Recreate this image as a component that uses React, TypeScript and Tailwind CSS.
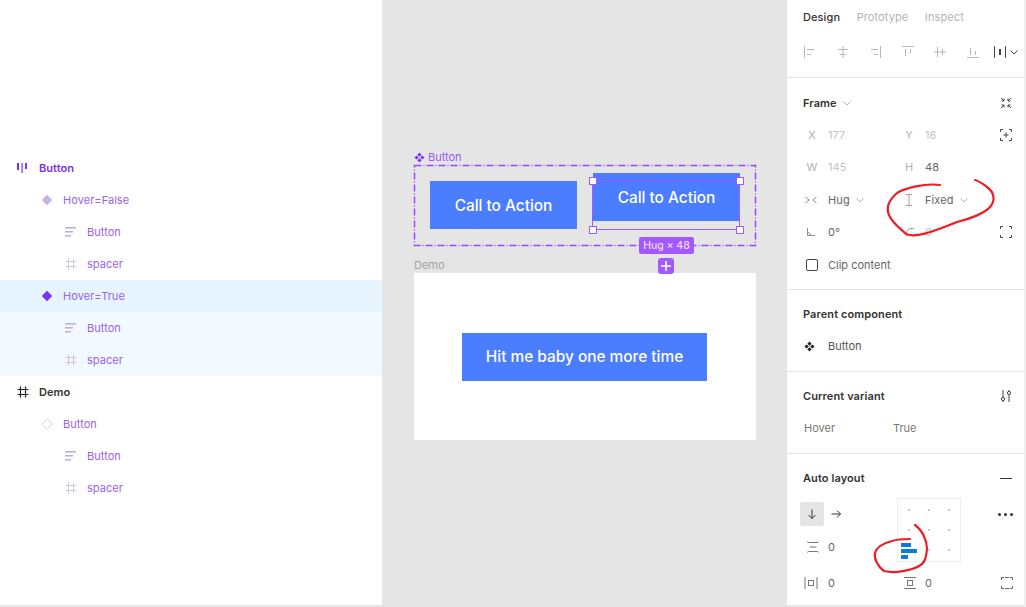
const purple = '#7b2ff0';

function TextIcon() {
  return (
    <svg width="12" height="10" viewBox="0 0 12 10" fill="#c4aed9">
      <rect x="0" y="0" width="11" height="1.6" />
      <rect x="0" y="4" width="8" height="1.6" />
      <rect x="0" y="8" width="6" height="1.6" />
    </svg>
  );
}

function HashIcon({ color = '#d3c3e4', strong = false }: { color?: string; strong?: boolean }) {
  return (
    <svg width="12" height="12" viewBox="0 0 12 12" fill="none" stroke={color} strokeWidth={strong ? 1.2 : 1}>
      <path d="M3.5 0.5v11M8.5 0.5v11M0.5 3.5h11M0.5 8.5h11" />
    </svg>
  );
}

function Diamond({ fill, stroke }: { fill: string; stroke?: string }) {
  return (
    <svg width="12" height="12" viewBox="0 0 12 12" fill={fill} stroke={stroke}>
      <path d="M6 0.8 11.2 6 6 11.2 0.8 6Z" />
    </svg>
  );
}

function AutoLayoutIcon() {
  return (
    <svg width="12" height="10" viewBox="0 0 12 10" fill={purple}>
      <rect x="0" y="0" width="2" height="7" />
      <rect x="4.5" y="0" width="1.2" height="10" />
      <rect x="8" y="0" width="2" height="6" />
    </svg>
  );
}

function ComponentIcon({ color, size = 11 }: { color: string; size?: number }) {
  return (
    <svg width={size} height={size} viewBox="0 0 12 12" fill={color}>
      <path d="M6 0.5 8.3 2.9 6 5.2 3.7 2.9Z" />
      <path d="M6 6.8 8.3 9.1 6 11.5 3.7 9.1Z" />
      <path d="M2.9 3.7 5.2 6 2.9 8.3 0.5 6Z" />
      <path d="M9.1 3.7 11.5 6 9.1 8.3 6.8 6Z" />
    </svg>
  );
}

function Chevron({ className = '' }: { className?: string }) {
  return (
    <svg className={className} width="8" height="5" viewBox="0 0 8 5" fill="none" stroke="#b3b3b3">
      <path d="M0.5 0.5 4 4 7.5 0.5" />
    </svg>
  );
}

type LayerRowProps = {
  icon: React.ReactNode;
  label: string;
  depth: number;
  bg?: string;
  bold?: boolean;
  dark?: boolean;
};

function LayerRow({ icon, label, depth, bg = '', bold, dark }: LayerRowProps) {
  const pad = depth === 0 ? 'pl-[17px]' : depth === 1 ? 'pl-[41px]' : 'pl-[65px]';
  return (
    <div className={`flex h-8 items-center ${pad} ${bg}`}>
      <span className="flex w-[22px] items-center">{icon}</span>
      <span
        className={`text-[11px] tracking-[0.05px] ${bold ? 'font-semibold' : 'font-normal'} ${
          dark ? 'text-[#333333]' : bold ? 'text-[#7b2ff0]' : 'text-[#9a63e8]'
        }`}
      >
        {label}
      </span>
    </div>
  );
}

function LayersPanel() {
  return (
    <div className="h-full w-[382px] shrink-0 bg-white pt-[152px]">
      <LayerRow icon={<AutoLayoutIcon />} label="Button" depth={0} bold />
      <LayerRow icon={<Diamond fill="#c8b4de" />} label="Hover=False" depth={1} />
      <LayerRow icon={<TextIcon />} label="Button" depth={2} />
      <LayerRow icon={<HashIcon />} label="spacer" depth={2} />
      <LayerRow icon={<Diamond fill={purple} />} label="Hover=True" depth={1} bg="bg-[#e5f4ff]" />
      <LayerRow icon={<TextIcon />} label="Button" depth={2} bg="bg-[#f2f9ff]" />
      <LayerRow icon={<HashIcon />} label="spacer" depth={2} bg="bg-[#f2f9ff]" />
      <LayerRow icon={<HashIcon color="#222222" strong />} label="Demo" depth={0} bold dark />
      <LayerRow icon={<Diamond fill="none" stroke="#dccdec" />} label="Button" depth={1} />
      <LayerRow icon={<TextIcon />} label="Button" depth={2} />
      <LayerRow icon={<HashIcon />} label="spacer" depth={2} />
    </div>
  );
}

function Handle({ className }: { className: string }) {
  return <div className={`absolute h-2 w-2 border border-[#a259ff] bg-white ${className}`} />;
}

function Canvas() {
  return (
    <div className="relative h-full w-[405px] shrink-0 bg-[#e5e5e5]">
      <div className="absolute left-[32px] top-[149px] flex items-center gap-[3px] text-[11px] text-[#9a5cf0]">
        <ComponentIcon color={purple} />
        <span>Button</span>
      </div>
      <svg className="absolute left-[31px] top-[164px]" width="344" height="83" fill="none" stroke="#9747ff" strokeWidth="1.5">
        <rect x="1.5" y="1.5" width="341" height="80" strokeDasharray="7 2 1 2" />
      </svg>
      <div className="absolute left-[48px] top-[181px] flex h-[48px] w-[147px] items-center justify-center bg-[#4a7dff] pt-[2px] text-[15.4px] font-medium text-white">
        Call to Action
      </div>
      <div className="absolute left-[211px] top-[173px] flex h-[48px] w-[147px] items-center justify-center bg-[#4a7dff] pt-[2px] text-[15.4px] font-medium text-white">
        Call to Action
      </div>
      <div className="absolute left-[210px] top-[180px] h-[50px] w-[148px] border border-[#a259ff]" />
      <Handle className="left-[207px] top-[177px]" />
      <Handle className="left-[354px] top-[177px]" />
      <Handle className="left-[207px] top-[226px]" />
      <Handle className="left-[354px] top-[226px]" />
      <div className="absolute left-[257px] top-[237px] flex h-[17px] w-[55px] items-center justify-center rounded-[2px] bg-[#a259ff] text-[10.5px] font-medium text-[#eadcff]">
        Hug × 48
      </div>
      <div className="absolute left-[276px] top-[258px] z-10 flex h-4 w-4 items-center justify-center rounded-[3px] bg-[#a259ff]">
        <svg width="12" height="12" viewBox="0 0 12 12" stroke="white" strokeWidth="1.6">
          <path d="M6 1v10M1 6h10" />
        </svg>
      </div>
      <div className="absolute left-[32px] top-[257px] text-[11px] text-[#a3a3a3]">Demo</div>
      <div className="absolute left-[32px] top-[273px] flex h-[167px] w-[342px] items-center bg-white pl-[48px]">
        <div className="flex h-[48px] w-[245px] items-center justify-center bg-[#4a7dff] text-[15.4px] font-medium text-white">
          Hit me baby one more time
        </div>
      </div>
    </div>
  );
}

function Icon({ children, w = 16, h = 16 }: { children: React.ReactNode; w?: number; h?: number }) {
  return (
    <svg width={w} height={h} viewBox={`0 0 ${w} ${h}`} fill="none" stroke="currentColor">
      {children}
    </svg>
  );
}

function AlignRow() {
  return (
    <div className="flex h-[43px] items-start gap-[16.5px] pl-[15px] pt-[10px] text-[#b8b8b8]">
      <Icon><path d="M2.5 2v12M5 5.5h7M5 10.5h4" /></Icon>
      <Icon><path d="M8 2v12M3 5.5h10M5 10.5h6" /></Icon>
      <Icon><path d="M13.5 2v12M4 5.5h7M7 10.5h4" /></Icon>
      <Icon><path d="M2 2.5h12M5.5 5v7M10.5 5v4" /></Icon>
      <Icon><path d="M2 8h12M5.5 3v10M10.5 5v6" /></Icon>
      <Icon><path d="M2 13.5h12M5.5 4v7M10.5 7v4" /></Icon>
      <span className="-ml-[4px] flex items-center gap-[3px] text-[#444444]">
        <Icon w={14}><path d="M1.5 2v12M12.5 2v12" /><path d="M7 5v6" strokeWidth="2" /></Icon>
        <Chevron className="[&>path]:stroke-[#444444]" />
      </span>
    </div>
  );
}

function Label({ children }: { children: React.ReactNode }) {
  return <span className="mr-[8px] w-[16px] text-center text-[11px] text-[#b3b3b3]">{children}</span>;
}

function Value({ children, dim }: { children: React.ReactNode; dim?: boolean }) {
  return <span className={`text-[11px] tracking-[0.1px] ${dim ? 'text-[#c4c4c4]' : 'text-[#666666]'}`}>{children}</span>;
}

function Field({ children }: { children: React.ReactNode }) {
  return <div className="flex w-[97px] items-center">{children}</div>;
}

function PropRow({ children, right }: { children: React.ReactNode; right?: React.ReactNode }) {
  return (
    <div className="flex h-8 items-center pl-[17px] pr-[10px]">
      {children}
      {right && <div className="ml-auto flex items-center text-[#444444]">{right}</div>}
    </div>
  );
}

function Heading({ children, right }: { children: React.ReactNode; right?: React.ReactNode }) {
  return (
    <div className="flex h-[48px] items-center justify-between pl-[16px] pr-[10px]">
      <div className="flex items-center gap-[6px] text-[11px] font-semibold tracking-[0.1px] text-[#333333]">{children}</div>
      <div className="flex items-center text-[#444444]">{right}</div>
    </div>
  );
}

function AlignmentBox() {
  const dots = [0, 1, 2, 3, 4, 5, 6, 7, 8];
  return (
    <div className="grid h-[64px] w-[64px] grid-cols-3 place-items-center border border-[#eeeeee] bg-white p-px">
      {dots.map((d) => (
        <div key={d} className="h-[2px] w-[2px] rounded-full bg-[#bbbbbb]" />
      ))}
    </div>
  );
}

function PropsPanel() {
  return (
    <div className="h-full min-w-0 flex-1 bg-white text-[11px]">
      <div className="h-[78px] border-b border-[#e5e5e5]">
        <div className="flex h-[34px] items-center gap-[16.5px] pl-[16px] text-[11px] tracking-[0.1px]">
          <span className="font-medium text-[#333333]">Design</span>
          <span className="text-[#b3b3b3]">Prototype</span>
          <span className="text-[#b3b3b3]">Inspect</span>
        </div>
        <AlignRow />
      </div>

      <div className="h-[212px] border-b border-[#e5e5e5] pt-px">
        <Heading
          right={
            <Icon>
              <path d="M3 3l3 3M6 3.5V6H3.5M13 3l-3 3M10 3.5V6h2.5M3 13l3-3M6 12.5V10H3.5M13 13l-3-3M10 12.5V10h2.5" />
            </Icon>
          }
        >
          Frame <Chevron />
        </Heading>
        <div className="-mt-[8px]">
          <PropRow
            right={
              <Icon>
                <path d="M2.5 5V2.5H5M11 2.5h2.5V5M13.5 11v2.5H11M5 13.5H2.5V11M8 5.5v5M5.5 8h5" />
              </Icon>
            }
          >
            <Field><Label>X</Label><Value dim>177</Value></Field>
            <Field><Label>Y</Label><Value dim>16</Value></Field>
          </PropRow>
          <PropRow>
            <Field><Label>W</Label><Value dim>145</Value></Field>
            <Field><Label>H</Label><Value>48</Value></Field>
          </PropRow>
          <div className="mt-px">
            <PropRow>
              <div className="flex w-[97px] items-center">
                <span className="w-[24px] text-[#8c8c8c]">
                  <Icon w={14} h={10}><path d="M1.5 2 5 5 1.5 8M12.5 2 9 5 12.5 8" /></Icon>
                </span>
                <Value>Hug</Value>
                <Chevron className="ml-[6px]" />
              </div>
              <div className="flex items-center pl-[4px]">
                <span className="w-[20px] text-[#a0a0a0]">
                  <Icon w={8} h={12}><path d="M1 0.5h6M4 0.5v11M1 11.5h6" /></Icon>
                </span>
                <Value>Fixed</Value>
                <Chevron className="ml-[6px]" />
              </div>
            </PropRow>
          </div>
          <PropRow
            right={
              <Icon>
                <path d="M2.5 5V2.5H5M11 2.5h2.5V5M13.5 11v2.5H11M5 13.5H2.5V11" />
              </Icon>
            }
          >
            <Field>
              <span className="w-[24px] pl-[2px] text-[#8c8c8c]">
                <Icon w={10} h={10}><path d="M1.5 1v7.5H9M1.5 4.5l4 4" /></Icon>
              </span>
              <Value>0°</Value>
            </Field>
            <div className="flex items-center pl-[4px]">
              <span className="w-[20px] text-[#9a9a9a]">
                <Icon w={10} h={10}><path d="M1.5 9V6a4.5 4.5 0 0 1 4.5-4.5H9" /></Icon>
              </span>
              <Value dim>0</Value>
            </div>
          </PropRow>
          <div className="mt-px">
            <PropRow>
              <div className="ml-[2px] mr-[10px] h-[12px] w-[12px] rounded-[2px] border border-[#444444]" />
              <span className="text-[11px] text-[#666666]">Clip content</span>
            </PropRow>
          </div>
        </div>
      </div>

      <div className="h-[82px] border-b border-[#e5e5e5]">
        <Heading>Parent component</Heading>
        <div className="-mt-[8px]">
          <PropRow>
            <span className="w-[24px]"><ComponentIcon color="#222222" /></span>
            <span className="text-[#555555]">Button</span>
          </PropRow>
        </div>
      </div>

      <div className="h-[82px] border-b border-[#e5e5e5]">
        <Heading
          right={
            <Icon>
              <circle cx="5" cy="11" r="1.6" />
              <circle cx="11" cy="5" r="1.6" />
              <path d="M5 2v7.4M5 12.6V14M11 2v1.4M11 6.6V14" />
            </Icon>
          }
        >
          Current variant
        </Heading>
        <div className="-mt-[8px]">
          <PropRow>
            <span className="w-[89px] text-[#777777]">Hover</span>
            <span className="text-[#777777]">True</span>
          </PropRow>
        </div>
      </div>

      <div>
        <Heading right={<div className="mr-[2px] h-px w-3 bg-[#333333]" />}>Auto layout</Heading>
        <div className="flex pl-[13px] pr-[11px]">
          <div className="w-[97px]">
            <div className="flex h-[33px] items-start">
              <div className="flex h-6 w-6 items-center justify-center rounded-[2px] bg-[#e5e5e5] text-[#333333]">
                <Icon w={12} h={12}><path d="M6 1.5v9M2.5 7 6 10.5 9.5 7" /></Icon>
              </div>
              <div className="flex h-6 w-6 items-center justify-center text-[#333333]">
                <Icon w={12} h={12}><path d="M1.5 6h9M7 2.5 10.5 6 7 9.5" /></Icon>
              </div>
            </div>
            <div className="flex h-[24px] items-center pl-[6px]">
              <span className="w-[22px] text-[#777777]">
                <Icon w={14} h={14}><path d="M1 1.5c1 1 2 1 2 1h8s1 0 2-1M3.5 7h7M1 12.5c1-1 2-1 2-1h8s1 0 2 1" /></Icon>
              </span>
              <Value>0</Value>
            </div>
          </div>
          <div className="-mt-[4px]"><AlignmentBox /></div>
          <div className="ml-auto mt-[11px] flex h-[3px] gap-[3px]">
            <div className="h-[3px] w-[3px] rounded-full bg-[#333333]" />
            <div className="h-[3px] w-[3px] rounded-full bg-[#333333]" />
            <div className="h-[3px] w-[3px] rounded-full bg-[#333333]" />
          </div>
        </div>
        <div className="mt-[9px] flex h-6 items-center pl-[17px] pr-[10px]">
          <div className="flex w-[97px] items-center">
            <span className="w-[24px] text-[#777777]">
              <Icon w={14} h={14}><path d="M1 1v12M13 1v12" /><rect x="4.5" y="4.5" width="5" height="5" /></Icon>
            </span>
            <Value>0</Value>
          </div>
          <span className="w-[24px] pl-[2px] text-[#777777]">
            <Icon w={14} h={14}><path d="M1 1.5h12M1 12.5h12" /><rect x="4.5" y="4.5" width="5" height="5" /></Icon>
          </span>
          <Value>0</Value>
          <span className="ml-auto text-[#666666]">
            <Icon w={14} h={14}><path d="M1.5 4V1.5H4M10 1.5h2.5V4M12.5 10v2.5H10M4 12.5H1.5V10M5 1.5h4M5 12.5h4" /></Icon>
          </span>
        </div>
      </div>
    </div>
  );
}

// hand drawn marks on top of the screenshot
function Scribbles() {
  return (
    <svg className="pointer-events-none absolute left-0 top-0" width="1026" height="607" fill="none" stroke="#ee1c25" strokeWidth="2.2" strokeLinecap="round">
      <path d="M940 185C925 183 905 188 897 193C889 200 886 208 889 215C893 224 900 228 906 234C915 238 930 233 957 222C970 219 985 213 990 207C996 200 994 192 987 187C982 183 979 181 975 180" />
      <path d="M915 525C922 530 927 540 927 549C926 558 925 563 919 566C912 570 895 574 884 571C877 566 874 558 875 553C877 546 884 543 892 541C898 539 904 539 910 539" />
      <g fill="#0a7cdf" stroke="none">
        <rect x="901" y="543" width="10" height="4" />
        <rect x="901" y="549" width="16" height="4" />
        <rect x="901" y="555" width="7" height="4" />
      </g>
    </svg>
  );
}

export default function App() {
  return (
    <div className="relative h-[607px] w-[1026px] overflow-hidden bg-white font-['Inter',sans-serif]">
      <div className="flex h-[605px] w-[1024px]">
        <LayersPanel />
        <Canvas />
        <PropsPanel />
      </div>
      <div className="h-[2px] bg-[#e5e5e5]" />
      <div className="absolute right-0 top-0 h-full w-[2px] bg-[#efefef]" />
      <Scribbles />
    </div>
  );
}
